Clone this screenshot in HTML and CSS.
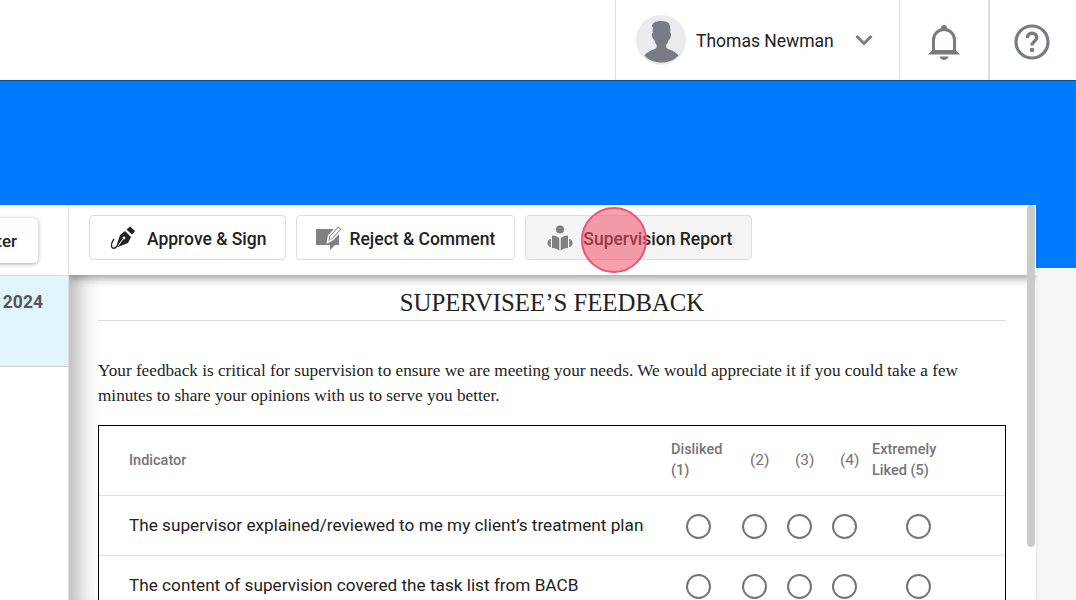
FILE: index.html
```html
<!DOCTYPE html>
<html lang="en">
<head>
  <meta charset="UTF-8" />
  <meta name="viewport" content="width=device-width, initial-scale=1" />
  <title>Supervisee's Feedback</title>
  <link rel="stylesheet" href="styles.css">
</head>
<body>
  <header class="topbar">
    <div class="user-box">
      <svg class="avatar" viewBox="0 0 50 50">
        <circle cx="25" cy="25" r="25" fill="#e9ebee"/>
        <path d="M16 12c0-4 3-6 9-6s9 2 9 6c.5 3 .3 5 .2 6 1.500 0 1 4-.5 6-.5 1-1.200 1-1.500 2-.4 2-1.200 3-2 4l.3 3c3 2 9 3 12 7.500-4 4.500-10 7-17 7s-13.500-2.500-17-7c3-4.500 9-5.500 12-7.500l.3-3c-.8-1-1.600-2-2-4-.3-1-1-1-1.500-2-1.500-2-2-6-.5-6-.1-1-.3-3 .2-6z" fill="#777b83"/>
      </svg>
      <span class="user-name">Thomas Newman</span>
      <svg class="chevron" viewBox="0 0 18 12">
        <path d="M1.500 2L9 9.500 16.500 2" fill="none" stroke="#777b83" stroke-width="3"/>
      </svg>
    </div>
    <div class="icon-box">
      <svg class="bell" viewBox="0 0 32 38">
        <circle cx="16" cy="4" r="3" fill="#777b83"/>
        <path d="M5.500 27V16C5.500 10 10 5.500 16 5.500S26.500 10 26.500 16v11" fill="none" stroke="#777b83" stroke-width="3"/>
        <path d="M0 30.500L4.500 26h23l4.500 4.500z" fill="#777b83"/>
        <path d="M11.500 32.500h9c-.5 2.500-2.500 3.500-4.500 3.500s-4-1-4.500-3.500z" fill="#777b83"/>
      </svg>
    </div>
    <div class="icon-box help">
      <svg class="help-icon" viewBox="0 0 36 36">
        <circle cx="18" cy="18" r="16" fill="none" stroke="#777b83" stroke-width="3.200"/>
        <path d="M13.300 14c0-3 2-4.700 4.700-4.700s4.700 1.700 4.700 4.400c0 3.500-4.700 3.800-4.700 7.800" fill="none" stroke="#777b83" stroke-width="3.400"/>
        <circle cx="18" cy="26" r="2.300" fill="#777b83"/>
      </svg>
    </div>
  </header>

  <div class="hero"></div>

  <div class="content">
    <aside class="sidebar">
      <div class="filter-row">
        <button class="filter-btn">Filter</button>
      </div>
      <div class="session-row">
        <span class="session-date">January 12, 2024</span>
      </div>
    </aside>

    <section class="panel">
      <div class="toolbar">
        <button class="tool-btn">
          <svg class="tool-icon icon-sign" viewBox="0 0 26 24">
            <path d="M16.500 3.500L20 .5l5 4.500-3 3.500z" fill="#222"/>
            <path d="M15 5l6 6-3 6-10 4-1.500-1.500L10 9z" fill="#222"/>
            <path d="M8 20l5-7" stroke="#fff" stroke-width="1"/>
            <circle cx="14" cy="12" r="1.400" fill="#fff"/>
            <path d="M7 20c-2 3-5 3-5.500 0C1 17 3 15 4 13" fill="none" stroke="#222" stroke-width="1.400"/>
          </svg>
          Approve &amp; Sign
        </button>
        <button class="tool-btn">
          <svg class="tool-icon icon-reject" viewBox="0 0 26 26">
            <path d="M0 4h23v16h-4l-5 5v-5H0z" fill="#808080"/>
            <path d="M11.500 17.500l1-6.500 9.500-10.500 4.500 3.500-9.500 10.500z" fill="#808080" stroke="#fff" stroke-width="1.500"/>
            <path d="M13.500 15.500l.7-4 8-8.700 2 1.500-8 8.700z" fill="#fff"/>
          </svg>
          Reject &amp; Comment
        </button>
        <button class="tool-btn active">
          <svg class="tool-icon icon-report" viewBox="0 0 26 26">
            <circle cx="13" cy="4.500" r="4" fill="#808080"/>
            <path d="M5 10.500c3 0 6 1.200 7.300 3V26c-1.300-1.800-4.300-3-7.300-3zM21 10.500c-3 0-6 1.200-7.300 3V26c1.300-1.800 4.300-3 7.300-3z" fill="#808080"/>
            <path d="M3.800 14v8C1.700 22 .5 20.200 .5 18s1.200-4 3.300-4zM22.200 14v8c2.100 0 3.300-1.800 3.300-4s-1.200-4-3.300-4z" fill="#808080"/>
          </svg>
          Supervision Report
        </button>
      </div>

      <div class="doc">
        <h1 class="doc-title">SUPERVISEE’S FEEDBACK</h1>
        <p class="doc-intro">Your feedback is critical for supervision to ensure we are meeting your needs. We would appreciate it if you could take a few minutes to share your opinions with us to serve you better.</p>

        <table class="feedback-table">
          <colgroup>
            <col class="col-text">
            <col class="col-first">
            <col class="col-mid">
            <col class="col-mid">
            <col class="col-mid">
            <col class="col-last">
            <col>
          </colgroup>
          <thead>
            <tr>
              <th class="indicator">Indicator</th>
              <th class="th-first">Disliked (1)</th>
              <th class="th-mid">(2)</th>
              <th class="th-mid">(3)</th>
              <th class="th-mid">(4)</th>
              <th class="th-last">Extremely Liked (5)</th>
              <th></th>
            </tr>
          </thead>
          <tbody>
            <tr>
              <td class="question">The supervisor explained/reviewed to me my client’s treatment plan</td>
              <td><input type="radio" name="q1"></td>
              <td><input type="radio" name="q1"></td>
              <td><input type="radio" name="q1"></td>
              <td><input type="radio" name="q1"></td>
              <td><input type="radio" name="q1"></td>
              <td></td>
            </tr>
            <tr>
              <td class="question">The content of supervision covered the task list from BACB</td>
              <td><input type="radio" name="q2"></td>
              <td><input type="radio" name="q2"></td>
              <td><input type="radio" name="q2"></td>
              <td><input type="radio" name="q2"></td>
              <td><input type="radio" name="q2"></td>
              <td></td>
            </tr>
          </tbody>
        </table>
      </div>

      <div class="scroll-thumb"></div>
    </section>
  </div>

  <div class="click-marker"></div>
</body>
</html>
```

FILE: styles.css
```css
html, body {
  height: 600px;
  overflow: hidden;
}
body {
  margin: 0;
  font-family: Roboto, sans-serif;
  background: #f5f5f5;
  color: #222;
  position: relative;
}
.topbar {
  height: 80px;
  background: white;
  border-bottom: 1px solid #0b4f96;
  display: flex;
  justify-content: flex-end;
}
.user-box {
  display: flex;
  align-items: center;
  width: 284px;
  box-sizing: border-box;
  padding-left: 20px;
  border-left: 1px solid #ddd;
}
.avatar {
  width: 50px;
  height: 50px;
}
.user-name {
  font-size: 17.500px;
  margin: 2px 0 0 10px;
  color: #222;
}
.chevron {
  width: 18px;
  height: 12px;
  margin-left: 21px;
}
.icon-box {
  width: 89px;
  box-sizing: border-box;
  border-left: 1px solid #ddd;
  display: flex;
  align-items: center;
  justify-content: center;
}
.icon-box.help {
  width: 88px;
  padding-right: 2px;
  border-left: 2px solid #ddd;
}
.bell {
  width: 32px;
  height: 38px;
  margin-top: 5px;
}
.help-icon {
  width: 36px;
  height: 36px;
  margin-top: 3px;
}
.hero {
  height: 187px;
  background: #007bff;
}
.content {
  display: flex;
  margin-top: -63px;
  width: 1036px;
  height: 395px;
  box-shadow: 0 0 3px rgba(0,0,0,0.12);
}
.sidebar {
  width: 69px;
  flex: none;
  background: white;
  border-right: 1px solid #ddd;
  box-sizing: border-box;
  overflow: hidden;
}
.filter-row {
  height: 71px;
  box-sizing: border-box;
  padding: 13px 30px 0 0;
  display: flex;
  justify-content: flex-end;
  border-bottom: 1px solid #ddd;
}
.filter-btn {
  flex: none;
  height: 45px;
  width: 110px;
  text-align: right;
  padding: 0 21px 0 0;
  background: white;
  border: none;
  border-radius: 5px;
  box-shadow: 0 1px 4px rgba(0,0,0,0.35);
  font-family: Roboto, sans-serif;
  font-size: 17px;
  font-weight: 500;
  color: #222;
}
.session-row {
  height: 91px;
  box-sizing: border-box;
  background: #e1f5fe;
  border-bottom: 1px solid #ccc;
  padding: 16px 25px 0 0;
  display: flex;
  justify-content: flex-end;
}
.session-date {
  flex: none;
  font-size: 17.500px;
  font-weight: 700;
  color: #555;
}
.panel {
  flex: 1;
  min-width: 0;
  background: white;
  position: relative;
  overflow: hidden;
}
.toolbar {
  height: 70px;
  box-sizing: border-box;
  padding: 10px 20px 0;
  display: flex;
  align-items: flex-start;
  gap: 10px;
  background: white;
  box-shadow: 0 2px 10px rgba(0,0,0,0.45);
  position: relative;
}
.tool-btn {
  height: 45px;
  padding: 2px 19px 0 0;
  display: flex;
  align-items: center;
  background: white;
  border: 1px solid #ddd;
  border-radius: 4px;
  font-family: Roboto, sans-serif;
  font-size: 17.500px;
  font-weight: 500;
  color: #222;
}
.tool-btn.active {
  background: #f4f4f4;
}
.tool-icon {
  width: 26px;
  height: 26px;
  flex: none;
}
.icon-sign {
  margin: -2px 11px 0 20px;
}
.icon-reject {
  margin: -2px 7px 0 19px;
}
.icon-report {
  margin: -2px 10px 0 21px;
}
.doc {
  height: 325px;
  box-sizing: border-box;
  padding: 13px 30px 0 29px;
  box-shadow: inset 28px 0 24px -20px rgba(0,0,0,0.32);
}
.doc-title {
  margin: 0;
  padding-bottom: 3px;
  border-bottom: 1px solid #ddd;
  font-family: "Liberation Serif", serif;
  font-size: 24.800px;
  font-weight: 400;
  line-height: 29px;
  text-align: center;
  color: #222;
}
.doc-intro {
  margin: 37px 0 17px;
  font-family: "Liberation Serif", serif;
  font-size: 17.200px;
  line-height: 25px;
  color: #222;
}
.feedback-table {
  width: 908px;
  table-layout: fixed;
  border-collapse: separate;
  border-spacing: 0;
  border: 1px solid black;
}
.col-text { width: 566px; }
.col-first { width: 67px; }
.col-mid { width: 45px; }
.col-last { width: 103px; }
.feedback-table th {
  height: 69px;
  padding: 0;
  text-align: left;
  font-size: 14.500px;
  font-weight: 500;
  line-height: 21px;
  color: #757575;
  border-bottom: 1px solid #e0e0e0;
}
.feedback-table th.indicator {
  padding-left: 30px;
}
.feedback-table th.th-first {
  height: 67px;
  padding: 0 0 2px 6px;
}
.feedback-table th.th-mid {
  padding-left: 18px;
  font-size: 15.500px;
  font-weight: 400;
}
.feedback-table th.th-last {
  height: 67px;
  padding: 0 25px 2px 5px;
}
.feedback-table td {
  height: 59px;
  padding: 0;
  text-align: center;
  border-bottom: 1px solid #e0e0e0;
}
.feedback-table td.question {
  height: 57px;
  padding: 0 0 2px 30px;
  text-align: left;
  font-size: 17.200px;
  color: #222;
}
.feedback-table input {
  appearance: none;
  display: block;
  width: 25px;
  height: 25px;
  margin: 2px auto 0;
  border: 2px solid #757575;
  border-radius: 50%;
  background: white;
}
.scroll-thumb {
  position: absolute;
  top: 0;
  right: 1px;
  width: 8px;
  height: 342px;
  background: #cacaca;
  border-radius: 4px;
}
.click-marker {
  position: absolute;
  left: 581px;
  top: 207px;
  width: 66px;
  height: 66px;
  box-sizing: border-box;
  border: 2px solid #ea5474;
  border-radius: 50%;
  background: rgba(240, 80, 105, 0.55);
}
```
